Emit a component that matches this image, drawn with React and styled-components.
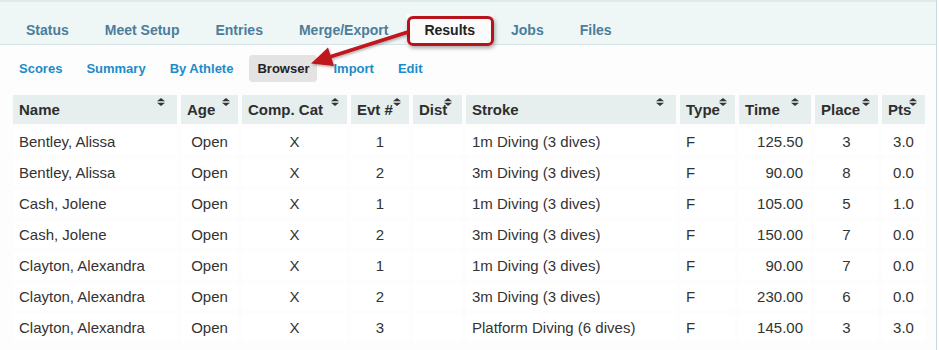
import React from "react";
import styled, { createGlobalStyle } from "styled-components";

const Global = createGlobalStyle`
  html, body { margin: 0; padding: 0; background: #fdfdfd; }
  body { font-family: "Liberation Sans", Arial, sans-serif; color: #333; }
`;

const Page = styled.div`
  position: relative;
  width: 936px;
  min-height: 350px;
  border-right: 1px solid #cbd9e1;
  background: #fdfdfd;
`;

const TabBar = styled.nav`
  display: flex;
  align-items: flex-end;
  height: 42px;
  padding-left: 8px;
  border-top: 2px solid #e1e9ec;
  border-bottom: 1px solid #d5e3e7;
  background: #eef6f6;
`;

const Tab = styled.div`
  display: flex;
  align-items: center;
  height: 28px;
  padding: 2px 18px 0;
  margin-bottom: -1px;
  font-size: 14px;
  font-weight: bold;
  color: ${(p) => (p.$active ? "#222" : "#4b7d9c")};
  background: ${(p) => (p.$active ? "#fbfbfb" : "transparent")};
  border-bottom: 1px solid ${(p) => (p.$active ? "#fbfbfb" : "transparent")};
`;

const SubNav = styled.div`
  display: flex;
  gap: 8px;
  padding: 10px 0 0 11px;
`;

const SubLink = styled.div`
  display: flex;
  align-items: center;
  height: 27px;
  padding: 0 8px;
  border-radius: 4px;
  font-size: 13px;
  font-weight: bold;
  color: ${(p) => (p.$active ? "#222" : "#1b8cc8")};
  background: ${(p) => (p.$active ? "#e3e3e3" : "transparent")};
`;

const Table = styled.table`
  margin: 9px 0 0 9px;
  width: 920px;
  table-layout: fixed;
  border-collapse: separate;
  border-spacing: 4px;
  font-size: 15px;
`;

const Th = styled.th`
  position: relative;
  height: 29px;
  padding: 0 6px;
  text-align: left;
  font-weight: bold;
  color: #2e2e2e;
  background: #e6eeee;
  white-space: nowrap;
`;

const SortIcon = styled.svg`
  position: absolute;
  top: 3px;
  right: ${(p) => p.$right || 8}px;
  width: 8px;
  height: 8px;
`;

const Td = styled.td`
  height: 27px;
  padding: 0 ${(p) => (p.$align === "right" ? 8 : 6)}px 0 6px;
  text-align: ${(p) => p.$align || "left"};
  color: #333;
  background: #ffffff;
  white-space: nowrap;
`;

const Callout = styled.div`
  position: absolute;
  left: 407px;
  top: 16px;
  width: 87px;
  height: 30px;
  box-sizing: border-box;
  border: 3px solid #b8121b;
  border-radius: 6px;
  box-shadow: 1px 2px 4px rgba(0, 0, 0, 0.35);
  pointer-events: none;
`;

const Arrow = styled.svg`
  position: absolute;
  left: 0;
  top: 0;
  width: 939px;
  height: 100px;
  pointer-events: none;
  overflow: visible;
`;

const cols = [
  { key: "name", label: "Name", w: 164, align: "left", icon: 12 },
  { key: "age", label: "Age", w: 57, align: "center", icon: 8 },
  { key: "cat", label: "Comp. Cat", w: 105, align: "center", icon: 8 },
  { key: "evt", label: "Evt #", w: 58, align: "center", icon: 8 },
  { key: "dist", label: "Dist", w: 49, align: "center", icon: 10 },
  { key: "stroke", label: "Stroke", w: 210, align: "left", icon: 12 },
  { key: "type", label: "Type", w: 55, align: "left", icon: 8 },
  { key: "time", label: "Time", w: 72, align: "right", icon: 12 },
  { key: "place", label: "Place", w: 63, align: "center", icon: 8 },
  { key: "pts", label: "Pts", w: 43, align: "center", icon: 8 },
];

const rows = [
  ["Bentley, Alissa", "Open", "X", "1", "", "1m Diving (3 dives)", "F", "125.50", "3", "3.0"],
  ["Bentley, Alissa", "Open", "X", "2", "", "3m Diving (3 dives)", "F", "90.00", "8", "0.0"],
  ["Cash, Jolene", "Open", "X", "1", "", "1m Diving (3 dives)", "F", "105.00", "5", "1.0"],
  ["Cash, Jolene", "Open", "X", "2", "", "3m Diving (3 dives)", "F", "150.00", "7", "0.0"],
  ["Clayton, Alexandra", "Open", "X", "1", "", "1m Diving (3 dives)", "F", "90.00", "7", "0.0"],
  ["Clayton, Alexandra", "Open", "X", "2", "", "3m Diving (3 dives)", "F", "230.00", "6", "0.0"],
  ["Clayton, Alexandra", "Open", "X", "3", "", "Platform Diving (6 dives)", "F", "145.00", "3", "3.0"],
];

const tabs = ["Status", "Meet Setup", "Entries", "Merge/Export", "Results", "Jobs", "Files"];
const subs = ["Scores", "Summary", "By Athlete", "Browser", "Import", "Edit"];

function Sort({ right }) {
  return (
    <SortIcon $right={right} viewBox="0 0 8 8">
      <polygon points="0,3.3 8,3.3 4,0" fill="#333" />
      <polygon points="0,4.7 8,4.7 4,8" fill="#333" />
    </SortIcon>
  );
}

export default function App() {
  return (
    <>
      <Global />
      <Page>
        <TabBar>
          {tabs.map((t) => (
            <Tab key={t} $active={t === "Results"}>
              {t}
            </Tab>
          ))}
        </TabBar>
        <SubNav>
          {subs.map((s) => (
            <SubLink key={s} $active={s === "Browser"}>
              {s}
            </SubLink>
          ))}
        </SubNav>
        <Table>
          <colgroup>
            {cols.map((c) => (
              <col key={c.key} style={{ width: c.w }} />
            ))}
          </colgroup>
          <thead>
            <tr>
              {cols.map((c) => (
                <Th key={c.key}>
                  {c.label}
                  <Sort right={c.icon} />
                </Th>
              ))}
            </tr>
          </thead>
          <tbody>
            {rows.map((r, i) => (
              <tr key={i}>
                {r.map((v, j) => (
                  <Td key={j} $align={cols[j].align}>
                    {v}
                  </Td>
                ))}
              </tr>
            ))}
          </tbody>
        </Table>
        <Callout />
        <Arrow viewBox="0 0 939 100">
          <defs>
            <filter id="sh" x="-10%" y="-10%" width="130%" height="150%">
              <feDropShadow dx="1" dy="1.5" stdDeviation="1.2" floodColor="#000" floodOpacity="0.3" />
            </filter>
          </defs>
          <g filter="url(#sh)">
            <line x1="408" y1="32" x2="328" y2="57.5" stroke="#c0131c" strokeWidth="3.5" />
            <polygon points="311,63.5 334,66 328,47.5" fill="#c0131c" />
          </g>
        </Arrow>
      </Page>
    </>
  );
}
